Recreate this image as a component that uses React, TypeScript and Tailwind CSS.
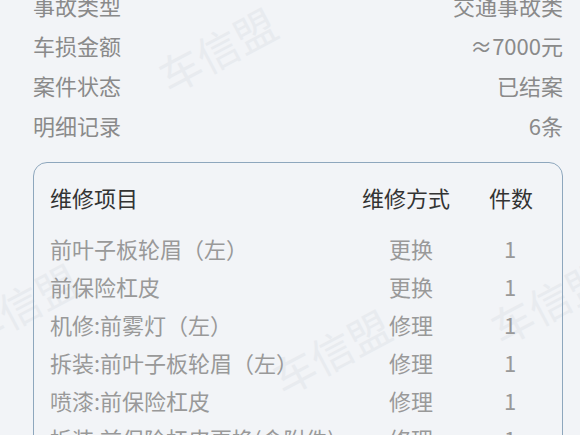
import React from 'react';

interface InfoRow {
  label: string;
  value: string;
}

interface RepairItem {
  name: string;
  method: string;
  count: number;
}

const info: InfoRow[] = [
  { label: '事故类型', value: '交通事故类' },
  { label: '车损金额', value: '≈7000元' },
  { label: '案件状态', value: '已结案' },
  { label: '明细记录', value: '6条' },
];

const items: RepairItem[] = [
  { name: '前叶子板轮眉（左）', method: '更换', count: 1 },
  { name: '前保险杠皮', method: '更换', count: 1 },
  { name: '机修:前雾灯（左）', method: '修理', count: 1 },
  { name: '拆装:前叶子板轮眉（左）', method: '修理', count: 1 },
  { name: '喷漆:前保险杠皮', method: '修理', count: 1 },
  { name: '拆装:前保险杠皮更换(含附件)', method: '修理', count: 1 },
];

// 水印
const Watermark: React.FC<{ className: string }> = ({ className }) => (
  <span
    className={`pointer-events-none absolute select-none whitespace-nowrap text-[42px] leading-none text-[#e8ebef] -rotate-[28deg] ${className}`}
  >
    车信盟
  </span>
);

const App: React.FC = () => (
  <div
    className="relative h-[435px] w-[580px] overflow-hidden bg-[#f2f4f7]"
    style={{ fontFamily: '"Noto Sans CJK SC", "Noto Sans", sans-serif' }}
  >
    <Watermark className="left-[154px] top-[28px]" />
    <Watermark className="left-[268px] top-[330px]" />
    <Watermark className="left-[486px] top-[280px]" />
    <Watermark className="left-[-44px] top-[284px]" />

    <div className="relative pl-[33px] pr-[17px]">
      {/* 概要 */}
      <div className="-mt-[15px] flex flex-col">
        {info.map((row) => (
          <div key={row.label} className="flex h-[40px] items-center justify-between text-[22px] text-[#8a8a8a]">
            <span>{row.label}</span>
            <span>{row.value}</span>
          </div>
        ))}
      </div>

      {/* 明细表 */}
      <div className="mt-[17px] rounded-[14px] border border-[#8ea7bd] pl-[16px] pr-[11px] pt-[15px]">
        <div className="grid h-[38px] grid-cols-[1fr_100px_80px] items-center gap-x-[13px] text-[22px] text-[#333333]">
          <span>维修项目</span>
          <span className="pr-[4px] text-center">维修方式</span>
          <span className="text-center">件数</span>
        </div>
        <div className="mt-[13px] flex flex-col">
          {items.map((it) => (
            <div
              key={it.name}
              className="grid h-[38px] grid-cols-[1fr_100px_80px] items-center gap-x-[13px] text-[22px] text-[#999999]"
            >
              <span className="whitespace-nowrap">{it.name}</span>
              <span className="pl-[6px] text-center">{it.method}</span>
              <span className="pr-[2px] text-center">{it.count}</span>
            </div>
          ))}
        </div>
      </div>
    </div>
  </div>
);

export default App;
